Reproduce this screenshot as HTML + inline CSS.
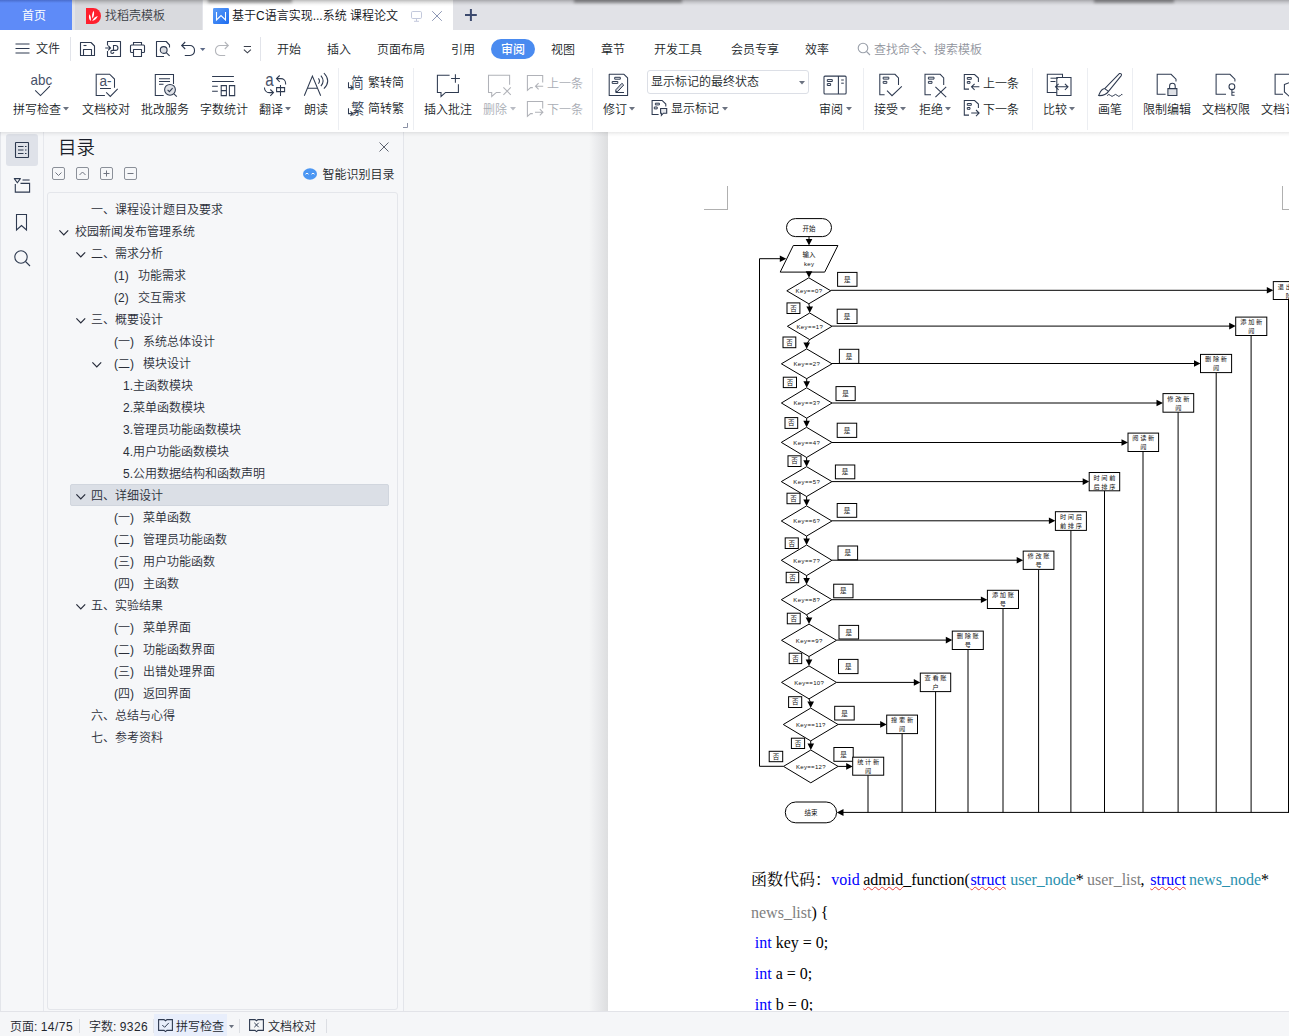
<!DOCTYPE html>
<html lang="zh-CN"><head><meta charset="utf-8"><title>WPS</title><style>
*{box-sizing:border-box;margin:0;padding:0}
html,body{width:1289px;height:1036px;overflow:hidden;background:#fff}
body{position:relative;font-family:'Liberation Sans','Noto Sans CJK SC',sans-serif;font-size:12px;color:#1e2330}
.t{position:absolute;white-space:nowrap;font-weight:350}
.r{position:absolute;display:block}
svg{overflow:visible}
</style></head><body>
<div class="r" style="left:404px;top:132px;width:885px;height:880px;background:#f5f6f7;"></div>
<div class="r" style="left:589px;top:132px;width:19px;height:880px;background:linear-gradient(to right, rgba(245,246,247,0), #ebecee 40%, #dddedf);"></div>
<div class="r" style="left:608px;top:132px;width:681px;height:880px;background:#ffffff;"></div>
<div class="r" style="left:704px;top:209px;width:24px;height:1px;background:#b0b0b0;"></div>
<div class="r" style="left:727px;top:186px;width:1px;height:24px;background:#b0b0b0;"></div>
<div class="r" style="left:1282px;top:186px;width:1px;height:24px;background:#b0b0b0;"></div>
<div class="r" style="left:1282px;top:209px;width:8px;height:1px;background:#b0b0b0;"></div>
<svg class="r" style="left:0;top:0;font-family:'Liberation Sans','Noto Sans CJK SC',sans-serif" width="1289" height="1011" viewBox="0 0 1289 1011"><path d="M1288.5 299.5L1288.5 812.4" stroke="#000" stroke-width="1" fill="none"/><path d="M1251.1 335.5L1251.1 812.4" stroke="#000" stroke-width="1" fill="none"/><path d="M1216.2 372.6L1216.2 812.4" stroke="#000" stroke-width="1" fill="none"/><path d="M1178.1 412.2L1178.1 812.4" stroke="#000" stroke-width="1" fill="none"/><path d="M1143.0 451.5L1143.0 812.4" stroke="#000" stroke-width="1" fill="none"/><path d="M1104.5 490.8L1104.5 812.4" stroke="#000" stroke-width="1" fill="none"/><path d="M1070.9 530.4L1070.9 812.4" stroke="#000" stroke-width="1" fill="none"/><path d="M1038.6 569.4L1038.6 812.4" stroke="#000" stroke-width="1" fill="none"/><path d="M1003.0 608.5L1003.0 812.4" stroke="#000" stroke-width="1" fill="none"/><path d="M968.0 649.5L968.0 812.4" stroke="#000" stroke-width="1" fill="none"/><path d="M935.6 691.6L935.6 812.4" stroke="#000" stroke-width="1" fill="none"/><path d="M902.1 733.6L902.1 812.4" stroke="#000" stroke-width="1" fill="none"/><path d="M868.0 775.2L868.0 812.4" stroke="#000" stroke-width="1" fill="none"/><path d="M843 812.4L1290 812.4" stroke="#000" stroke-width="1" fill="none"/><polygon points="836.8,812.4 843.5,808.9 843.5,815.9" fill="#000"/><path d="M759.5 766.3L759.5 258.7" stroke="#000" stroke-width="1" fill="none"/><path d="M759.5 766.3L783.5 766.3" stroke="#000" stroke-width="1" fill="none"/><path d="M759.5 258.7L781.3 258.7" stroke="#000" stroke-width="1" fill="none"/><polygon points="779.8,255.39999999999998 779.8,262.0 786.3,258.7" fill="#000"/><rect x="786.5" y="218.6" width="45" height="18" rx="9" fill="#fff" stroke="#000"/><text x="809" y="230.6" font-size="6.5" text-anchor="middle" fill="#111" textLength="13" lengthAdjust="spacing">开始</text><path d="M809 236.6L809 240.5" stroke="#000" stroke-width="1" fill="none"/><polygon points="805.7,239.0 812.3,239.0 809,245.5" fill="#000"/><polygon points="793.3,245.5 837.9,245.5 824.7,272.1 780.2,272.1" fill="#fff" stroke="#000" stroke-width="1"/><text x="809" y="256.8" font-size="6.5" text-anchor="middle" fill="#111" textLength="13" lengthAdjust="spacing">输入</text><text x="809" y="266.2" font-size="6" text-anchor="middle" fill="#111" textLength="10" lengthAdjust="spacing">key</text><path d="M809 272.1L809 272.8" stroke="#000" stroke-width="1" fill="none"/><polygon points="805.7,271.3 812.3,271.3 809,277.8" fill="#000"/><rect x="837.6" y="272.4" width="19.4" height="13.9" fill="#fff" stroke="#000" stroke-width="1"/><text x="847.3" y="281.75" font-size="6.5" text-anchor="middle" fill="#111">是</text><rect x="837.2" y="309.2" width="19.8" height="14.3" fill="#fff" stroke="#000" stroke-width="1"/><text x="847.1" y="318.75" font-size="6.5" text-anchor="middle" fill="#111">是</text><rect x="839.4" y="349.3" width="19.4" height="14.1" fill="#fff" stroke="#000" stroke-width="1"/><text x="849.0999999999999" y="358.75" font-size="6.5" text-anchor="middle" fill="#111">是</text><rect x="836" y="386.6" width="19.2" height="14.0" fill="#fff" stroke="#000" stroke-width="1"/><text x="845.6" y="396.0" font-size="6.5" text-anchor="middle" fill="#111">是</text><rect x="837.2" y="423.2" width="19.5" height="14.2" fill="#fff" stroke="#000" stroke-width="1"/><text x="846.95" y="432.69999999999993" font-size="6.5" text-anchor="middle" fill="#111">是</text><rect x="835.4" y="465" width="19.4" height="13.8" fill="#fff" stroke="#000" stroke-width="1"/><text x="845.0999999999999" y="474.29999999999995" font-size="6.5" text-anchor="middle" fill="#111">是</text><rect x="837.2" y="503.5" width="19.5" height="13.8" fill="#fff" stroke="#000" stroke-width="1"/><text x="846.95" y="512.8" font-size="6.5" text-anchor="middle" fill="#111">是</text><rect x="838" y="546" width="19.6" height="13.8" fill="#fff" stroke="#000" stroke-width="1"/><text x="847.8" y="555.3" font-size="6.5" text-anchor="middle" fill="#111">是</text><rect x="833.7" y="584.2" width="19.3" height="13.6" fill="#fff" stroke="#000" stroke-width="1"/><text x="843.35" y="593.4" font-size="6.5" text-anchor="middle" fill="#111">是</text><rect x="839" y="625.4" width="19.6" height="13.6" fill="#fff" stroke="#000" stroke-width="1"/><text x="848.8" y="634.6" font-size="6.5" text-anchor="middle" fill="#111">是</text><rect x="838.5" y="659.4" width="19.5" height="14.2" fill="#fff" stroke="#000" stroke-width="1"/><text x="848.25" y="668.9" font-size="6.5" text-anchor="middle" fill="#111">是</text><rect x="834.7" y="706.3" width="19.5" height="13.7" fill="#fff" stroke="#000" stroke-width="1"/><text x="844.45" y="715.55" font-size="6.5" text-anchor="middle" fill="#111">是</text><rect x="833.9" y="747.5" width="19.3" height="13.8" fill="#fff" stroke="#000" stroke-width="1"/><text x="843.55" y="756.8" font-size="6.5" text-anchor="middle" fill="#111">是</text><path d="M830.8 290.3L1268.3 290.3" stroke="#000" stroke-width="1" fill="none"/><polygon points="1266.8,287.0 1266.8,293.6 1273.3,290.3" fill="#000"/><path d="M832.0 326.1L1230.7 326.1" stroke="#000" stroke-width="1" fill="none"/><polygon points="1229.2,322.8 1229.2,329.40000000000003 1235.7,326.1" fill="#000"/><path d="M832.0 363.5L1195.5 363.5" stroke="#000" stroke-width="1" fill="none"/><polygon points="1194.0,360.2 1194.0,366.8 1200.5,363.5" fill="#000"/><path d="M832.0 403.0L1158.0 403.0" stroke="#000" stroke-width="1" fill="none"/><polygon points="1156.5,399.7 1156.5,406.3 1163.0,403.0" fill="#000"/><path d="M831.9 442.5L1123.0 442.5" stroke="#000" stroke-width="1" fill="none"/><polygon points="1121.5,439.2 1121.5,445.8 1128.0,442.5" fill="#000"/><path d="M831.9 481.6L1084.2 481.6" stroke="#000" stroke-width="1" fill="none"/><polygon points="1082.7,478.3 1082.7,484.90000000000003 1089.2,481.6" fill="#000"/><path d="M831.9 520.8L1050.4 520.8" stroke="#000" stroke-width="1" fill="none"/><polygon points="1048.9,517.5 1048.9,524.0999999999999 1055.4,520.8" fill="#000"/><path d="M831.9 560.2L1018.2 560.2" stroke="#000" stroke-width="1" fill="none"/><polygon points="1016.7,556.9000000000001 1016.7,563.5 1023.2,560.2" fill="#000"/><path d="M831.9 599.7L982.4 599.7" stroke="#000" stroke-width="1" fill="none"/><polygon points="980.9,596.4000000000001 980.9,603.0 987.4,599.7" fill="#000"/><path d="M836.5 640.1L947.3 640.1" stroke="#000" stroke-width="1" fill="none"/><polygon points="945.8,636.8000000000001 945.8,643.4 952.3,640.1" fill="#000"/><path d="M836.5 682.4L915.3 682.4" stroke="#000" stroke-width="1" fill="none"/><polygon points="913.8,679.1 913.8,685.6999999999999 920.3,682.4" fill="#000"/><path d="M838.1 724.4L881.7 724.4" stroke="#000" stroke-width="1" fill="none"/><polygon points="880.2,721.1 880.2,727.6999999999999 886.7,724.4" fill="#000"/><path d="M838.0999999999999 766.4L847.7 766.4" stroke="#000" stroke-width="1" fill="none"/><polygon points="846.2,763.1 846.2,769.6999999999999 852.7,766.4" fill="#000"/><rect x="1273.3" y="281.6" width="30.9" height="17.9" fill="#fff" stroke="#000" stroke-width="1"/><text x="1288.75" y="288.6" font-size="6.2" text-anchor="middle" fill="#111" textLength="22" lengthAdjust="spacing">退出登</text><text x="1288.75" y="297.6" font-size="6.2" text-anchor="middle" fill="#111">陆</text><rect x="1235.7" y="317.1" width="31.1" height="18.4" fill="#fff" stroke="#000" stroke-width="1"/><text x="1251.25" y="324.1" font-size="6.2" text-anchor="middle" fill="#111" textLength="22" lengthAdjust="spacing">添加新</text><text x="1251.25" y="333.1" font-size="6.2" text-anchor="middle" fill="#111">闻</text><rect x="1200.5" y="354.4" width="31.1" height="18.2" fill="#fff" stroke="#000" stroke-width="1"/><text x="1216.05" y="361.4" font-size="6.2" text-anchor="middle" fill="#111" textLength="22" lengthAdjust="spacing">删除新</text><text x="1216.05" y="370.4" font-size="6.2" text-anchor="middle" fill="#111">闻</text><rect x="1163.0" y="393.6" width="30.7" height="18.6" fill="#fff" stroke="#000" stroke-width="1"/><text x="1178.35" y="400.6" font-size="6.2" text-anchor="middle" fill="#111" textLength="22" lengthAdjust="spacing">修改新</text><text x="1178.35" y="409.6" font-size="6.2" text-anchor="middle" fill="#111">闻</text><rect x="1128.0" y="433.1" width="30.6" height="18.4" fill="#fff" stroke="#000" stroke-width="1"/><text x="1143.3" y="440.1" font-size="6.2" text-anchor="middle" fill="#111" textLength="22" lengthAdjust="spacing">阅读新</text><text x="1143.3" y="449.1" font-size="6.2" text-anchor="middle" fill="#111">闻</text><rect x="1089.2" y="472.5" width="30.5" height="18.3" fill="#fff" stroke="#000" stroke-width="1"/><text x="1104.45" y="479.5" font-size="6.2" text-anchor="middle" fill="#111" textLength="22" lengthAdjust="spacing">时间前</text><text x="1104.45" y="488.5" font-size="6.2" text-anchor="middle" fill="#111" textLength="22" lengthAdjust="spacing">后排序</text><rect x="1055.4" y="511.7" width="31.0" height="18.7" fill="#fff" stroke="#000" stroke-width="1"/><text x="1070.9" y="518.7" font-size="6.2" text-anchor="middle" fill="#111" textLength="22" lengthAdjust="spacing">时间后</text><text x="1070.9" y="527.7" font-size="6.2" text-anchor="middle" fill="#111" textLength="22" lengthAdjust="spacing">前排序</text><rect x="1023.2" y="551.1" width="30.7" height="18.3" fill="#fff" stroke="#000" stroke-width="1"/><text x="1038.5500000000002" y="558.1" font-size="6.2" text-anchor="middle" fill="#111" textLength="22" lengthAdjust="spacing">修改账</text><text x="1038.5500000000002" y="567.1" font-size="6.2" text-anchor="middle" fill="#111">号</text><rect x="987.4" y="590.3" width="31.1" height="18.2" fill="#fff" stroke="#000" stroke-width="1"/><text x="1002.95" y="597.3" font-size="6.2" text-anchor="middle" fill="#111" textLength="22" lengthAdjust="spacing">添加账</text><text x="1002.95" y="606.3" font-size="6.2" text-anchor="middle" fill="#111">号</text><rect x="952.3" y="631.1" width="31.0" height="18.4" fill="#fff" stroke="#000" stroke-width="1"/><text x="967.8" y="638.1" font-size="6.2" text-anchor="middle" fill="#111" textLength="22" lengthAdjust="spacing">删除账</text><text x="967.8" y="647.1" font-size="6.2" text-anchor="middle" fill="#111">号</text><rect x="920.3" y="673.1" width="30.4" height="18.5" fill="#fff" stroke="#000" stroke-width="1"/><text x="935.5" y="680.1" font-size="6.2" text-anchor="middle" fill="#111" textLength="22" lengthAdjust="spacing">查看账</text><text x="935.5" y="689.1" font-size="6.2" text-anchor="middle" fill="#111">户</text><rect x="886.7" y="715.1" width="30.8" height="18.5" fill="#fff" stroke="#000" stroke-width="1"/><text x="902.1" y="722.1" font-size="6.2" text-anchor="middle" fill="#111" textLength="22" lengthAdjust="spacing">搜索新</text><text x="902.1" y="731.1" font-size="6.2" text-anchor="middle" fill="#111">闻</text><rect x="852.7" y="757.2" width="31.0" height="18.0" fill="#fff" stroke="#000" stroke-width="1"/><text x="868.2" y="764.2" font-size="6.2" text-anchor="middle" fill="#111" textLength="22" lengthAdjust="spacing">统计新</text><text x="868.2" y="773.2" font-size="6.2" text-anchor="middle" fill="#111">闻</text><polygon points="808.8,277.8 830.8,290.8 808.8,303.8 786.8,290.8" fill="#fff" stroke="#000" stroke-width="1"/><text x="808.8" y="293.0" font-size="6" text-anchor="middle" fill="#111" textLength="26.5" lengthAdjust="spacing">Key==0?</text><path d="M808.8 303.8L809.7 308.0" stroke="#000" stroke-width="1" fill="none"/><polygon points="806.4000000000001,306.5 813.0,306.5 809.7,313.0" fill="#000"/><polygon points="809.7,313.0 832.0,326.3 809.7,339.6 787.4000000000001,326.3" fill="#fff" stroke="#000" stroke-width="1"/><text x="809.7" y="328.5" font-size="6" text-anchor="middle" fill="#111" textLength="26.5" lengthAdjust="spacing">Key==1?</text><path d="M809.7 339.6L806.7 343.90000000000003" stroke="#000" stroke-width="1" fill="none"/><polygon points="803.4000000000001,342.40000000000003 810.0,342.40000000000003 806.7,348.90000000000003" fill="#000"/><polygon points="806.7,348.90000000000003 832.0,363.8 806.7,378.7 781.4000000000001,363.8" fill="#fff" stroke="#000" stroke-width="1"/><text x="806.7" y="366.0" font-size="6" text-anchor="middle" fill="#111" textLength="26.5" lengthAdjust="spacing">Key==2?</text><path d="M806.7 378.7L806.7 382.8" stroke="#000" stroke-width="1" fill="none"/><polygon points="803.4000000000001,381.3 810.0,381.3 806.7,387.8" fill="#000"/><polygon points="806.7,387.8 832.0,403.0 806.7,418.2 781.4000000000001,403.0" fill="#fff" stroke="#000" stroke-width="1"/><text x="806.7" y="405.2" font-size="6" text-anchor="middle" fill="#111" textLength="26.5" lengthAdjust="spacing">Key==3?</text><path d="M806.7 418.2L806.6 422.29999999999995" stroke="#000" stroke-width="1" fill="none"/><polygon points="803.3000000000001,420.79999999999995 809.9,420.79999999999995 806.6,427.29999999999995" fill="#000"/><polygon points="806.6,427.29999999999995 831.9,442.4 806.6,457.5 781.3000000000001,442.4" fill="#fff" stroke="#000" stroke-width="1"/><text x="806.6" y="444.59999999999997" font-size="6" text-anchor="middle" fill="#111" textLength="26.5" lengthAdjust="spacing">Key==4?</text><path d="M806.6 457.5L806.6 461.70000000000005" stroke="#000" stroke-width="1" fill="none"/><polygon points="803.3000000000001,460.20000000000005 809.9,460.20000000000005 806.6,466.70000000000005" fill="#000"/><polygon points="806.6,466.70000000000005 831.9,481.6 806.6,496.5 781.3000000000001,481.6" fill="#fff" stroke="#000" stroke-width="1"/><text x="806.6" y="483.8" font-size="6" text-anchor="middle" fill="#111" textLength="26.5" lengthAdjust="spacing">Key==5?</text><path d="M806.6 496.5L806.6 500.9" stroke="#000" stroke-width="1" fill="none"/><polygon points="803.3000000000001,499.4 809.9,499.4 806.6,505.9" fill="#000"/><polygon points="806.6,505.9 831.9,521.0 806.6,536.1 781.3000000000001,521.0" fill="#fff" stroke="#000" stroke-width="1"/><text x="806.6" y="523.2" font-size="6" text-anchor="middle" fill="#111" textLength="26.5" lengthAdjust="spacing">Key==6?</text><path d="M806.6 536.1L806.6 540.0" stroke="#000" stroke-width="1" fill="none"/><polygon points="803.3000000000001,538.5 809.9,538.5 806.6,545.0" fill="#000"/><polygon points="806.6,545.0 831.9,560.3 806.6,575.5999999999999 781.3000000000001,560.3" fill="#fff" stroke="#000" stroke-width="1"/><text x="806.6" y="562.5" font-size="6" text-anchor="middle" fill="#111" textLength="26.5" lengthAdjust="spacing">Key==7?</text><path d="M806.6 575.5999999999999L806.6 579.6" stroke="#000" stroke-width="1" fill="none"/><polygon points="803.3000000000001,578.1 809.9,578.1 806.6,584.6" fill="#000"/><polygon points="806.6,584.6 831.9,599.7 806.6,614.8000000000001 781.3000000000001,599.7" fill="#fff" stroke="#000" stroke-width="1"/><text x="806.6" y="601.9000000000001" font-size="6" text-anchor="middle" fill="#111" textLength="26.5" lengthAdjust="spacing">Key==8?</text><path d="M806.6 614.8000000000001L809.0 619.0999999999999" stroke="#000" stroke-width="1" fill="none"/><polygon points="805.7,617.5999999999999 812.3,617.5999999999999 809.0,624.0999999999999" fill="#000"/><polygon points="809.0,624.0999999999999 836.5,640.3 809.0,656.5 781.5,640.3" fill="#fff" stroke="#000" stroke-width="1"/><text x="809.0" y="642.5" font-size="6" text-anchor="middle" fill="#111" textLength="26.5" lengthAdjust="spacing">Key==9?</text><path d="M809.0 656.5L809.0 660.9" stroke="#000" stroke-width="1" fill="none"/><polygon points="805.7,659.4 812.3,659.4 809.0,665.9" fill="#000"/><polygon points="809.0,665.9 836.5,682.4 809.0,698.9 781.5,682.4" fill="#fff" stroke="#000" stroke-width="1"/><text x="809.0" y="684.6" font-size="6" text-anchor="middle" fill="#111" textLength="29.5" lengthAdjust="spacing">Key==10?</text><path d="M809.0 698.9L810.7 703.1" stroke="#000" stroke-width="1" fill="none"/><polygon points="807.4000000000001,701.6 814.0,701.6 810.7,708.1" fill="#000"/><polygon points="810.7,708.1 838.1,724.5 810.7,740.9 783.3000000000001,724.5" fill="#fff" stroke="#000" stroke-width="1"/><text x="810.7" y="726.7" font-size="6" text-anchor="middle" fill="#111" textLength="29.5" lengthAdjust="spacing">Key==11?</text><path d="M810.7 740.9L810.8 745.0" stroke="#000" stroke-width="1" fill="none"/><polygon points="807.5,743.5 814.0999999999999,743.5 810.8,750.0" fill="#000"/><polygon points="810.8,750.0 838.0999999999999,766.4 810.8,782.8 783.5,766.4" fill="#fff" stroke="#000" stroke-width="1"/><text x="810.8" y="768.6" font-size="6" text-anchor="middle" fill="#111" textLength="29.5" lengthAdjust="spacing">Key==12?</text><rect x="787" y="302.9" width="12.9" height="10.6" fill="#fff" stroke="#000" stroke-width="1"/><text x="793.45" y="310.5" font-size="6.5" text-anchor="middle" fill="#111">否</text><rect x="783" y="337" width="12.8" height="10.7" fill="#fff" stroke="#000" stroke-width="1"/><text x="789.4" y="344.65000000000003" font-size="6.5" text-anchor="middle" fill="#111">否</text><rect x="783.3" y="377.2" width="13.2" height="10.4" fill="#fff" stroke="#000" stroke-width="1"/><text x="789.9" y="384.7" font-size="6.5" text-anchor="middle" fill="#111">否</text><rect x="785" y="417.6" width="12.7" height="10.8" fill="#fff" stroke="#000" stroke-width="1"/><text x="791.35" y="425.3" font-size="6.5" text-anchor="middle" fill="#111">否</text><rect x="788" y="455.8" width="13.0" height="10.7" fill="#fff" stroke="#000" stroke-width="1"/><text x="794.5" y="463.45" font-size="6.5" text-anchor="middle" fill="#111">否</text><rect x="787" y="493.2" width="13.0" height="10.5" fill="#fff" stroke="#000" stroke-width="1"/><text x="793.5" y="500.75" font-size="6.5" text-anchor="middle" fill="#111">否</text><rect x="785.2" y="537.9" width="13.1" height="10.6" fill="#fff" stroke="#000" stroke-width="1"/><text x="791.75" y="545.5" font-size="6.5" text-anchor="middle" fill="#111">否</text><rect x="786.2" y="572.3" width="12.5" height="10.4" fill="#fff" stroke="#000" stroke-width="1"/><text x="792.45" y="579.8" font-size="6.5" text-anchor="middle" fill="#111">否</text><rect x="787.3" y="613.2" width="12.9" height="10.6" fill="#fff" stroke="#000" stroke-width="1"/><text x="793.75" y="620.8" font-size="6.5" text-anchor="middle" fill="#111">否</text><rect x="789.2" y="653.2" width="12.5" height="10.4" fill="#fff" stroke="#000" stroke-width="1"/><text x="795.45" y="660.7" font-size="6.5" text-anchor="middle" fill="#111">否</text><rect x="788.6" y="696.7" width="13.1" height="10.8" fill="#fff" stroke="#000" stroke-width="1"/><text x="795.1500000000001" y="704.4" font-size="6.5" text-anchor="middle" fill="#111">否</text><rect x="791.4" y="738.2" width="13.2" height="10.3" fill="#fff" stroke="#000" stroke-width="1"/><text x="798.0" y="745.65" font-size="6.5" text-anchor="middle" fill="#111">否</text><rect x="769.2" y="751.3" width="13.5" height="10.4" fill="#fff" stroke="#000" stroke-width="1"/><text x="775.95" y="758.8" font-size="6.5" text-anchor="middle" fill="#111">否</text><rect x="785.3" y="802" width="51.3" height="20.8" rx="10.4" fill="#fff" stroke="#000"/><text x="811" y="814.8" font-size="6.5" text-anchor="middle" fill="#111" textLength="13" lengthAdjust="spacing">结束</text></svg>
<div class="t" style="font-weight:400;left:751px;top:869.4px;height:22px;line-height:22px;font-size:16px;font-family:'Liberation Serif','Noto Serif CJK SC',serif;color:#000;">函数代码：</div>
<div class="t" style="font-weight:400;left:831.2px;top:869.4px;height:22px;line-height:22px;font-size:16px;font-family:'Liberation Serif','Noto Serif CJK SC',serif;color:#0000ff;">void</div>
<div class="t" style="font-weight:400;left:863.2px;top:869.4px;height:22px;line-height:22px;font-size:16px;font-family:'Liberation Serif','Noto Serif CJK SC',serif;color:#000;"><span style="text-decoration:underline wavy #e8403a 1px;text-underline-offset:1px;">admid</span>_function(</div>
<div class="t" style="font-weight:400;left:970.4px;top:869.4px;height:22px;line-height:22px;font-size:16px;font-family:'Liberation Serif','Noto Serif CJK SC',serif;color:#0000ff;text-decoration:underline wavy #e8403a 1px;text-underline-offset:1px;">struct</div>
<div class="t" style="font-weight:400;left:1010.2px;top:869.4px;height:22px;line-height:22px;font-size:16px;font-family:'Liberation Serif','Noto Serif CJK SC',serif;color:#2b91af;">user_node</div>
<div class="t" style="font-weight:400;left:1075.8px;top:869.4px;height:22px;line-height:22px;font-size:16px;font-family:'Liberation Serif','Noto Serif CJK SC',serif;color:#000;">*</div>
<div class="t" style="font-weight:400;left:1087px;top:869.4px;height:22px;line-height:22px;font-size:16px;font-family:'Liberation Serif','Noto Serif CJK SC',serif;color:#808080;">user_list</div>
<div class="t" style="font-weight:400;left:1140.5px;top:869.4px;height:22px;line-height:22px;font-size:16px;font-family:'Liberation Serif','Noto Serif CJK SC',serif;color:#000;">,</div>
<div class="t" style="font-weight:400;left:1150.3px;top:869.4px;height:22px;line-height:22px;font-size:16px;font-family:'Liberation Serif','Noto Serif CJK SC',serif;color:#0000ff;text-decoration:underline wavy #e8403a 1px;text-underline-offset:1px;">struct</div>
<div class="t" style="font-weight:400;left:1189px;top:869.4px;height:22px;line-height:22px;font-size:16px;font-family:'Liberation Serif','Noto Serif CJK SC',serif;color:#2b91af;">news_node</div>
<div class="t" style="font-weight:400;left:1261px;top:869.4px;height:22px;line-height:22px;font-size:16px;font-family:'Liberation Serif','Noto Serif CJK SC',serif;color:#000;">*</div>
<div class="t" style="font-weight:400;left:751px;top:901.5px;height:22px;line-height:22px;font-size:16px;font-family:'Liberation Serif','Noto Serif CJK SC',serif;color:#000;"><span style="color:#808080">news_list</span>) {</div>
<div class="t" style="font-weight:400;left:754.8px;top:931.7px;height:22px;line-height:22px;font-size:16px;font-family:'Liberation Serif','Noto Serif CJK SC',serif;color:#000;"><span style="color:#0000ff">int</span> key = 0;</div>
<div class="t" style="font-weight:400;left:754.8px;top:962.7px;height:22px;line-height:22px;font-size:16px;font-family:'Liberation Serif','Noto Serif CJK SC',serif;color:#000;"><span style="color:#0000ff">int</span> a = 0;</div>
<div class="t" style="font-weight:400;left:754.8px;top:993.7px;height:22px;line-height:22px;font-size:16px;font-family:'Liberation Serif','Noto Serif CJK SC',serif;color:#000;"><span style="color:#0000ff">int</span> b = 0;</div>
<div class="r" style="left:0px;top:132px;width:404px;height:880px;background:#f6f7f9;"></div>
<div class="r" style="left:0px;top:132px;width:1px;height:880px;background:#e3e5ea;"></div>
<div class="r" style="left:43px;top:132px;width:1px;height:880px;background:#e6e8ed;"></div>
<div class="r" style="left:403px;top:132px;width:1px;height:880px;background:#e3e5ea;"></div>
<div class="r" style="left:6px;top:134px;width:32px;height:32px;background:#dfe2e9;border-radius:3px;"></div>
<svg class="r" style="left:15px;top:142px;" width="14" height="16" viewBox="0 0 14 16"><rect x="0.500" y="0.500" width="13" height="15" rx="0.500" fill="none" stroke="#2e3a50" stroke-width="1.100"/><path d="M3 4.500h5.500M10 4.500h1.500M3 8h5.500M10 8h1.500M3 11.500h5.500M10 11.500h1.500" fill="none" stroke="#2e3a50" stroke-width="1.100"/></svg>
<svg class="r" style="left:0px;top:0px;" width="44" height="200" viewBox="0 0 44 200"><path d="M15.300 184V192.100H29.600V183.400H20.500" fill="none" stroke="#2e3a50" stroke-width="1.100"/><path d="M22.500 180H29.600" fill="none" stroke="#2e3a50" stroke-width="1.100"/><path d="M14.300 178.600H20.400L17.350 182.800Z" fill="none" stroke="#2e3a50" stroke-width="1.100" stroke-linejoin="round"/></svg>
<svg class="r" style="left:16px;top:214px;" width="11" height="17" viewBox="0 0 11 17"><path d="M0.500 0.500h10v15.500l-5-4.500-5 4.500z" fill="none" stroke="#2e3a50" stroke-width="1.100"/></svg>
<svg class="r" style="left:14px;top:250px;" width="17" height="17" viewBox="0 0 17 17"><circle cx="7" cy="7" r="6.200" fill="none" stroke="#2e3a50" stroke-width="1.100"/><path d="M11.500 11.500l4.500 4.500" fill="none" stroke="#2e3a50" stroke-width="1.100"/></svg>
<div class="t" style="left:58px;top:135.50px;height:24px;line-height:24px;font-size:18.5px;color:#1b1f2a;">目录</div>
<svg class="r" style="left:52px;top:167px;" width="13" height="13" viewBox="0 0 13 13"><rect x="0.500" y="0.500" width="12" height="12" rx="1.500" fill="none" stroke="#8b9099"/><path d="M3.500 5.500l3 3 3-3" fill="none" stroke="#6f7480"/></svg>
<svg class="r" style="left:76px;top:167px;" width="13" height="13" viewBox="0 0 13 13"><rect x="0.500" y="0.500" width="12" height="12" rx="1.500" fill="none" stroke="#8b9099"/><path d="M3.500 8l3-3 3 3" fill="none" stroke="#6f7480"/></svg>
<svg class="r" style="left:100px;top:167px;" width="13" height="13" viewBox="0 0 13 13"><rect x="0.500" y="0.500" width="12" height="12" rx="1.500" fill="none" stroke="#8b9099"/><path d="M3.500 6.500h6M6.500 3.500v6" fill="none" stroke="#6f7480"/></svg>
<svg class="r" style="left:124px;top:167px;" width="13" height="13" viewBox="0 0 13 13"><rect x="0.500" y="0.500" width="12" height="12" rx="1.500" fill="none" stroke="#8b9099"/><path d="M3.500 6.500h6" fill="none" stroke="#6f7480"/></svg>
<svg class="r" style="left:379px;top:141.5px;" width="10" height="10" viewBox="0 0 10 10"><path d="M0.500 0.500l9 9M9.500 0.500l-9 9" fill="none" stroke="#5d6370" stroke-width="1"/></svg>
<svg class="r" style="left:303px;top:168px;" width="14" height="12" viewBox="0 0 14 12"><ellipse cx="7" cy="6" rx="7" ry="5.800" fill="#4b96f3"/><path d="M2.500 6.200q1.500-2 3 0M8.500 6.200q1.500-2 3 0" fill="none" stroke="#fff" stroke-width="1"/></svg>
<div class="t" style="left:322.5px;top:166.00px;height:18px;line-height:18px;font-size:12px;color:#1b1f2a;">智能识别目录</div>
<div class="r" style="left:47px;top:192px;width:351px;height:818px;background:#f6f7f9;border:1px solid #e4e6eb;border-radius:3px;"></div>
<div class="r" style="left:70.4px;top:483.6px;width:319px;height:22.6px;background:#dbdfe6;border:1px solid #d1d6de;border-radius:2px;"></div>
<div class="t" style="left:91px;top:201.00px;height:18px;line-height:18px;font-size:12px;color:#2a2e38;">一、课程设计题目及要求</div>
<div class="t" style="left:75px;top:223.00px;height:18px;line-height:18px;font-size:12px;color:#2a2e38;">校园新闻发布管理系统</div>
<svg class="r" style="left:59.3px;top:229.7px;" width="10" height="6" viewBox="0 0 10 6"><path d="M0.400 0.400l4.400 4.400 4.400-4.400" fill="none" stroke="#262b3a" stroke-width="1.200"/></svg>
<div class="t" style="left:91px;top:245.00px;height:18px;line-height:18px;font-size:12px;color:#2a2e38;">二、需求分析</div>
<svg class="r" style="left:76.3px;top:251.7px;" width="10" height="6" viewBox="0 0 10 6"><path d="M0.400 0.400l4.400 4.400 4.400-4.400" fill="none" stroke="#262b3a" stroke-width="1.200"/></svg>
<div class="t" style="left:114px;top:267.00px;height:18px;line-height:18px;font-size:12px;color:#2a2e38;">(1)</div>
<div class="t" style="left:138px;top:267.00px;height:18px;line-height:18px;font-size:12px;color:#2a2e38;">功能需求</div>
<div class="t" style="left:114px;top:289.00px;height:18px;line-height:18px;font-size:12px;color:#2a2e38;">(2)</div>
<div class="t" style="left:138px;top:289.00px;height:18px;line-height:18px;font-size:12px;color:#2a2e38;">交互需求</div>
<div class="t" style="left:91px;top:311.00px;height:18px;line-height:18px;font-size:12px;color:#2a2e38;">三、概要设计</div>
<svg class="r" style="left:76.3px;top:317.7px;" width="10" height="6" viewBox="0 0 10 6"><path d="M0.400 0.400l4.400 4.400 4.400-4.400" fill="none" stroke="#262b3a" stroke-width="1.200"/></svg>
<div class="t" style="left:114px;top:333.00px;height:18px;line-height:18px;font-size:12px;color:#2a2e38;">(一)</div>
<div class="t" style="left:143px;top:333.00px;height:18px;line-height:18px;font-size:12px;color:#2a2e38;">系统总体设计</div>
<div class="t" style="left:114px;top:355.00px;height:18px;line-height:18px;font-size:12px;color:#2a2e38;">(二)</div>
<div class="t" style="left:143px;top:355.00px;height:18px;line-height:18px;font-size:12px;color:#2a2e38;">模块设计</div>
<svg class="r" style="left:92.3px;top:361.7px;" width="10" height="6" viewBox="0 0 10 6"><path d="M0.400 0.400l4.400 4.400 4.400-4.400" fill="none" stroke="#262b3a" stroke-width="1.200"/></svg>
<div class="t" style="left:123px;top:377.00px;height:18px;line-height:18px;font-size:12px;color:#2a2e38;">1.主函数模块</div>
<div class="t" style="left:123px;top:399.00px;height:18px;line-height:18px;font-size:12px;color:#2a2e38;">2.菜单函数模块</div>
<div class="t" style="left:123px;top:421.00px;height:18px;line-height:18px;font-size:12px;color:#2a2e38;">3.管理员功能函数模块</div>
<div class="t" style="left:123px;top:443.00px;height:18px;line-height:18px;font-size:12px;color:#2a2e38;">4.用户功能函数模块</div>
<div class="t" style="left:123px;top:465.00px;height:18px;line-height:18px;font-size:12px;color:#2a2e38;">5.公用数据结构和函数声明</div>
<div class="t" style="left:91px;top:487.00px;height:18px;line-height:18px;font-size:12px;color:#2a2e38;">四、详细设计</div>
<svg class="r" style="left:76.3px;top:493.7px;" width="10" height="6" viewBox="0 0 10 6"><path d="M0.400 0.400l4.400 4.400 4.400-4.400" fill="none" stroke="#262b3a" stroke-width="1.200"/></svg>
<div class="t" style="left:114px;top:509.00px;height:18px;line-height:18px;font-size:12px;color:#2a2e38;">(一)</div>
<div class="t" style="left:143px;top:509.00px;height:18px;line-height:18px;font-size:12px;color:#2a2e38;">菜单函数</div>
<div class="t" style="left:114px;top:531.00px;height:18px;line-height:18px;font-size:12px;color:#2a2e38;">(二)</div>
<div class="t" style="left:143px;top:531.00px;height:18px;line-height:18px;font-size:12px;color:#2a2e38;">管理员功能函数</div>
<div class="t" style="left:114px;top:553.00px;height:18px;line-height:18px;font-size:12px;color:#2a2e38;">(三)</div>
<div class="t" style="left:143px;top:553.00px;height:18px;line-height:18px;font-size:12px;color:#2a2e38;">用户功能函数</div>
<div class="t" style="left:114px;top:575.00px;height:18px;line-height:18px;font-size:12px;color:#2a2e38;">(四)</div>
<div class="t" style="left:143px;top:575.00px;height:18px;line-height:18px;font-size:12px;color:#2a2e38;">主函数</div>
<div class="t" style="left:91px;top:597.00px;height:18px;line-height:18px;font-size:12px;color:#2a2e38;">五、实验结果</div>
<svg class="r" style="left:76.3px;top:603.7px;" width="10" height="6" viewBox="0 0 10 6"><path d="M0.400 0.400l4.400 4.400 4.400-4.400" fill="none" stroke="#262b3a" stroke-width="1.200"/></svg>
<div class="t" style="left:114px;top:619.00px;height:18px;line-height:18px;font-size:12px;color:#2a2e38;">(一)</div>
<div class="t" style="left:143px;top:619.00px;height:18px;line-height:18px;font-size:12px;color:#2a2e38;">菜单界面</div>
<div class="t" style="left:114px;top:641.00px;height:18px;line-height:18px;font-size:12px;color:#2a2e38;">(二)</div>
<div class="t" style="left:143px;top:641.00px;height:18px;line-height:18px;font-size:12px;color:#2a2e38;">功能函数界面</div>
<div class="t" style="left:114px;top:663.00px;height:18px;line-height:18px;font-size:12px;color:#2a2e38;">(三)</div>
<div class="t" style="left:143px;top:663.00px;height:18px;line-height:18px;font-size:12px;color:#2a2e38;">出错处理界面</div>
<div class="t" style="left:114px;top:685.00px;height:18px;line-height:18px;font-size:12px;color:#2a2e38;">(四)</div>
<div class="t" style="left:143px;top:685.00px;height:18px;line-height:18px;font-size:12px;color:#2a2e38;">返回界面</div>
<div class="t" style="left:91px;top:707.00px;height:18px;line-height:18px;font-size:12px;color:#2a2e38;">六、总结与心得</div>
<div class="t" style="left:91px;top:729.00px;height:18px;line-height:18px;font-size:12px;color:#2a2e38;">七、参考资料</div>
<div class="r" style="left:0px;top:0px;width:1289px;height:30px;background:#e1e2e7;"></div>
<div class="r" style="left:0px;top:0px;width:72px;height:30px;background:#5e8bf8;"></div>
<div class="r" style="left:72px;top:0px;width:130px;height:30px;background:#d9dade;"></div>
<div class="r" style="left:72px;top:0px;width:3px;height:30px;background:#e3e4e8;"></div>
<div class="r" style="left:202px;top:0px;width:1px;height:30px;background:#e4e5ea;"></div>
<div class="r" style="left:203px;top:0px;width:250px;height:30px;background:#ffffff;"></div>
<div class="r" style="left:72px;top:0px;width:1217px;height:6px;background:linear-gradient(to bottom, rgba(0,0,0,.26), rgba(0,0,0,.13) 35%, rgba(0,0,0,.04) 70%, rgba(0,0,0,0));"></div>
<div class="r" style="left:0px;top:0px;width:72px;height:3px;background:linear-gradient(to bottom, rgba(20,30,90,.28), rgba(20,30,90,0));"></div>
<div class="r" style="left:208px;top:-3px;width:84px;height:6px;background:rgba(0,0,0,.30);filter:blur(1.6px);"></div>
<div class="r" style="left:574px;top:-3px;width:108px;height:6px;background:rgba(0,0,0,.30);filter:blur(1.6px);"></div>
<div class="r" style="left:1094px;top:-3px;width:80px;height:6px;background:rgba(0,0,0,.30);filter:blur(1.6px);"></div>
<div class="t" style="left:22px;top:6.80px;height:18px;line-height:18px;font-size:12px;color:#ffffff;font-weight:400;">首页</div>
<svg class="r" style="left:86px;top:8px;" width="15" height="16" viewBox="0 0 15 16"><path d="M0 0h7.200a7.800 8 0 0 1 0 16h-7.200z" fill="#ff202e"/><path d="M3.400 6.200c1.500 2 1.900 4.400 1.300 6.900-1.700-1.700-2.300-4.200-1.300-6.900zM7.700 2.700c.9 2.700.4 5.400-1.300 7.900-.7-2.800-.3-5.500 1.300-7.900zM11.800 8.100c-1 2.600-2.800 4.300-5.600 4.900 1.100-2.500 2.900-4.200 5.600-4.900z" fill="#fff"/></svg>
<div class="t" style="left:105px;top:6.80px;height:18px;line-height:18px;font-size:12px;color:#3a3d45;">找稻壳模板</div>
<svg class="r" style="left:213px;top:8px;" width="16" height="16" viewBox="0 0 16 16"><defs><linearGradient id="wg" x1="0" y1="0" x2="1" y2="1"><stop offset="0" stop-color="#5c9cf7"/><stop offset="1" stop-color="#1c6cf0"/></linearGradient></defs><rect width="16" height="16" rx="1.200" fill="url(#wg)"/><path d="M3.500 4v8l4.500-4.400 4.500 4.400v-8" fill="none" stroke="#fff" stroke-width="1.100" stroke-linejoin="miter"/></svg>
<div class="t" style="left:232px;top:6.80px;height:18px;line-height:18px;font-size:12px;color:#111318;">基于C语言实现...系统 课程论文</div>
<svg class="r" style="left:411px;top:11px;" width="11" height="11" viewBox="0 0 11 11"><rect x="0.500" y="0.500" width="10" height="7" rx="1.200" fill="none" stroke="#c3c9dc"/><path d="M5.500 7.500v2.700M3 10.300h5" stroke="#c3c9dc" fill="none"/></svg>
<svg class="r" style="left:432px;top:11px;" width="10" height="10" viewBox="0 0 10 10"><path d="M0.200 0.200l9.600 9.600M9.800 0.200L0.200 9.800" stroke="#8d97b5" stroke-width="1" fill="none"/></svg>
<svg class="r" style="left:465px;top:9px;" width="12" height="12" viewBox="0 0 12 12"><path d="M5.900 0v11.900M0 6h11.800" stroke="#3c4a6e" stroke-width="2" fill="none"/></svg>
<div class="r" style="left:0px;top:30px;width:1289px;height:102px;background:#ffffff;"></div>
<svg class="r" style="left:15px;top:43px;" width="16" height="11" viewBox="0 0 16 11"><path d="M0.5 1h14M0.5 5.500h14M0.5 10h14" stroke="#2e3a50" stroke-width="1.1" fill="none"/></svg>
<div class="t" style="left:36px;top:40.20px;height:18px;line-height:18px;font-size:12px;color:#1b1f2a;">文件</div>
<div class="r" style="left:70px;top:37px;width:1px;height:24px;background:#e2e4ea;"></div>
<svg class="r" style="left:80px;top:42px;" width="15" height="14" viewBox="0 0 15 14"><path d="M0.500 0.500h10.500l3.500 3.500v9.500h-14z M3.500 13.500v-6h8v6" fill="none" stroke="#2e3a50" stroke-width="1.100" stroke-linejoin="round"/><path d="M3.500 3.500h3" stroke="#2e3a50" stroke-width="1.100"/></svg>
<svg class="r" style="left:105px;top:41px;" width="16" height="16" viewBox="0 0 16 16"><path d="M2.500 4.500v-4h13v15h-13v-5.500" fill="none" stroke="#2e3a50" stroke-width="1.100" stroke-linejoin="round"/><path d="M0.200 7h5 M3.200 4.700l2.300 2.300-2.300 2.300" fill="none" stroke="#2e3a50" stroke-width="1.100"/><path d="M8.500 9.500v-5h2a2.400 2.400 0 0 1 0 4.900h-3.200a1.500 1.500 0 1 0 1.500 1.500" fill="none" stroke="#2e3a50" stroke-width="1.100"/></svg>
<svg class="r" style="left:130px;top:42px;" width="15" height="15" viewBox="0 0 15 15"><path d="M3.500 3v-2.500h8v2.500 M3 10.500h-1.500a1 1 0 0 1 -1-1v-5.500a1 1 0 0 1 1-1h12a1 1 0 0 1 1 1v5.500a1 1 0 0 1 -1 1h-1.500" fill="none" stroke="#2e3a50" stroke-width="1.100"/><path d="M3.500 7.500h8v7h-8z" fill="none" stroke="#2e3a50" stroke-width="1.100" stroke-linejoin="round"/></svg>
<svg class="r" style="left:156px;top:41px;" width="15" height="16" viewBox="0 0 15 16"><path d="M13.500 6.500v-2.500l-3.300-3.500h-9.700v15h7.500" fill="none" stroke="#2e3a50" stroke-width="1.100" stroke-linejoin="round"/><circle cx="7.700" cy="9" r="3.400" fill="#dcdee3" stroke="#2e3a50" stroke-width="1.100"/><path d="M10.300 11.600l3.300 3.300" stroke="#2e3a50" stroke-width="1.100"/></svg>
<svg class="r" style="left:181px;top:41px;" width="14" height="15" viewBox="0 0 14 15"><path d="M0.800 4.500h8a4.500 4.500 0 0 1 4.700 4.700v0.600a4.500 4.500 0 0 1 -4.700 4.700h-5" fill="none" stroke="#2e3a50" stroke-width="1.100"/><path d="M4.200 1l-3.500 3.500 3.500 3.500" fill="none" stroke="#2e3a50" stroke-width="1.100"/></svg>
<svg class="r" style="left:200px;top:48px;" width="6" height="4" viewBox="0 0 6 4"><path d="M0 0h5.400l-2.700 3z" fill="#5d6a88"/></svg>
<svg class="r" style="left:215px;top:41px;" width="14" height="15" viewBox="0 0 14 15"><path d="M13.200 4.500h-8a4.500 4.500 0 0 0 -4.700 4.700v0.600a4.500 4.500 0 0 0 4.700 4.700h5" fill="none" stroke="#b3b5ba" stroke-width="1.100"/><path d="M9.800 1l3.500 3.500-3.500 3.500" fill="none" stroke="#b3b5ba" stroke-width="1.100"/></svg>
<svg class="r" style="left:243px;top:45px;" width="9" height="9" viewBox="0 0 9 9"><path d="M0.800 1.500h7.200 M0.900 4.600l3.500 3.200 3.500-3.200" fill="none" stroke="#3a3f4b" stroke-width="1.100"/></svg>
<div class="r" style="left:260px;top:37px;width:1px;height:24px;background:#e2e4ea;"></div>
<div class="t" style="left:277px;top:40.60px;height:18px;line-height:18px;font-size:12px;color:#1b1f2a;">开始</div>
<div class="t" style="left:327px;top:40.60px;height:18px;line-height:18px;font-size:12px;color:#1b1f2a;">插入</div>
<div class="t" style="left:377px;top:40.60px;height:18px;line-height:18px;font-size:12px;color:#1b1f2a;">页面布局</div>
<div class="t" style="left:451px;top:40.60px;height:18px;line-height:18px;font-size:12px;color:#1b1f2a;">引用</div>
<div class="t" style="left:551px;top:40.60px;height:18px;line-height:18px;font-size:12px;color:#1b1f2a;">视图</div>
<div class="t" style="left:601px;top:40.60px;height:18px;line-height:18px;font-size:12px;color:#1b1f2a;">章节</div>
<div class="t" style="left:654px;top:40.60px;height:18px;line-height:18px;font-size:12px;color:#1b1f2a;">开发工具</div>
<div class="t" style="left:731px;top:40.60px;height:18px;line-height:18px;font-size:12px;color:#1b1f2a;">会员专享</div>
<div class="t" style="left:805px;top:40.60px;height:18px;line-height:18px;font-size:12px;color:#1b1f2a;">效率</div>
<div class="r" style="left:491px;top:39px;width:44px;height:20px;background:#4a8bf0;border-radius:10px;"></div>
<div class="t" style="left:501px;top:40.60px;height:18px;line-height:18px;font-size:12px;color:#ffffff;font-weight:500;">审阅</div>
<svg class="r" style="left:857px;top:42px;" width="14" height="14" viewBox="0 0 14 14"><circle cx="6" cy="6" r="4.8" fill="none" stroke="#9aa0aa" stroke-width="1.1"/><path d="M9.5 9.500l3.5 3.5" stroke="#9aa0aa" stroke-width="1.1"/></svg>
<div class="t" style="left:874px;top:40.60px;height:18px;line-height:18px;font-size:12px;color:#8f939c;">查找命令、搜索模板</div>
<div class="t" style="left:13px;top:101.00px;height:18px;line-height:18px;font-size:12px;color:#1b1f2a;">拼写检查</div>
<svg class="r" style="left:63px;top:107px;" width="6" height="4" viewBox="0 0 6 4"><path d="M0 0h6l-3 3.500z" fill="#6b7280"/></svg>
<div class="t" style="left:82px;top:101.00px;height:18px;line-height:18px;font-size:12px;color:#1b1f2a;">文档校对</div>
<div class="t" style="left:141px;top:101.00px;height:18px;line-height:18px;font-size:12px;color:#1b1f2a;">批改服务</div>
<div class="t" style="left:200px;top:101.00px;height:18px;line-height:18px;font-size:12px;color:#1b1f2a;">字数统计</div>
<div class="t" style="left:259px;top:101.00px;height:18px;line-height:18px;font-size:12px;color:#1b1f2a;">翻译</div>
<svg class="r" style="left:285px;top:107px;" width="6" height="4" viewBox="0 0 6 4"><path d="M0 0h6l-3 3.500z" fill="#6b7280"/></svg>
<div class="t" style="left:304px;top:101.00px;height:18px;line-height:18px;font-size:12px;color:#1b1f2a;">朗读</div>
<div class="r" style="left:338px;top:68px;width:1px;height:62px;background:#eceef2;"></div>
<div class="t" style="left:368px;top:74.40px;height:18px;line-height:18px;font-size:12px;color:#1b1f2a;">繁转简</div>
<div class="t" style="left:368px;top:100.40px;height:18px;line-height:18px;font-size:12px;color:#1b1f2a;">简转繁</div>
<svg class="r" style="left:403.2px;top:123px;" width="5" height="5" viewBox="0 0 5 5"><path d="M4.5 0v4.500h-4.5" fill="none" stroke="#8a90a5"/></svg>
<div class="r" style="left:413px;top:68px;width:1px;height:62px;background:#eceef2;"></div>
<div class="t" style="left:424px;top:101.00px;height:18px;line-height:18px;font-size:12px;color:#1b1f2a;">插入批注</div>
<div class="t" style="left:483px;top:101.00px;height:18px;line-height:18px;font-size:12px;color:#a9adb5;">删除</div>
<svg class="r" style="left:510px;top:107px;" width="6" height="4" viewBox="0 0 6 4"><path d="M0 0h6l-3 3.500z" fill="#b9bcc4"/></svg>
<div class="t" style="left:547px;top:74.50px;height:18px;line-height:18px;font-size:12px;color:#a9adb5;">上一条</div>
<div class="t" style="left:547px;top:100.50px;height:18px;line-height:18px;font-size:12px;color:#a9adb5;">下一条</div>
<div class="r" style="left:592px;top:68px;width:1px;height:62px;background:#eceef2;"></div>
<div class="t" style="left:603px;top:101.00px;height:18px;line-height:18px;font-size:12px;color:#1b1f2a;">修订</div>
<svg class="r" style="left:629px;top:107px;" width="6" height="4" viewBox="0 0 6 4"><path d="M0 0h6l-3 3.500z" fill="#6b7280"/></svg>
<div class="r" style="left:647px;top:70px;width:162px;height:24px;background:#ffffff;border:1px solid #dcdfe6;border-radius:3px;"></div>
<div class="t" style="left:651px;top:73.00px;height:18px;line-height:18px;font-size:12px;color:#1b1f2a;">显示标记的最终状态</div>
<svg class="r" style="left:799px;top:81px;" width="6" height="4" viewBox="0 0 6 4"><path d="M0 0h6l-3 3.500z" fill="#6b7280"/></svg>
<div class="t" style="left:671px;top:100.30px;height:18px;line-height:18px;font-size:12px;color:#1b1f2a;">显示标记</div>
<svg class="r" style="left:722px;top:107px;" width="6" height="4" viewBox="0 0 6 4"><path d="M0 0h6l-3 3.500z" fill="#6b7280"/></svg>
<div class="t" style="left:819px;top:101.00px;height:18px;line-height:18px;font-size:12px;color:#1b1f2a;">审阅</div>
<svg class="r" style="left:846px;top:107px;" width="6" height="4" viewBox="0 0 6 4"><path d="M0 0h6l-3 3.500z" fill="#6b7280"/></svg>
<div class="r" style="left:863px;top:68px;width:1px;height:62px;background:#eceef2;"></div>
<div class="t" style="left:874px;top:101.00px;height:18px;line-height:18px;font-size:12px;color:#1b1f2a;">接受</div>
<svg class="r" style="left:900px;top:107px;" width="6" height="4" viewBox="0 0 6 4"><path d="M0 0h6l-3 3.500z" fill="#6b7280"/></svg>
<div class="t" style="left:919px;top:101.00px;height:18px;line-height:18px;font-size:12px;color:#1b1f2a;">拒绝</div>
<svg class="r" style="left:945px;top:107px;" width="6" height="4" viewBox="0 0 6 4"><path d="M0 0h6l-3 3.500z" fill="#6b7280"/></svg>
<div class="t" style="left:983px;top:74.50px;height:18px;line-height:18px;font-size:12px;color:#1b1f2a;">上一条</div>
<div class="t" style="left:983px;top:100.50px;height:18px;line-height:18px;font-size:12px;color:#1b1f2a;">下一条</div>
<div class="r" style="left:1032px;top:68px;width:1px;height:62px;background:#eceef2;"></div>
<div class="t" style="left:1043px;top:101.00px;height:18px;line-height:18px;font-size:12px;color:#1b1f2a;">比较</div>
<svg class="r" style="left:1069px;top:107px;" width="6" height="4" viewBox="0 0 6 4"><path d="M0 0h6l-3 3.500z" fill="#6b7280"/></svg>
<div class="r" style="left:1087px;top:68px;width:1px;height:62px;background:#eceef2;"></div>
<div class="t" style="left:1098px;top:101.00px;height:18px;line-height:18px;font-size:12px;color:#1b1f2a;">画笔</div>
<div class="r" style="left:1132px;top:68px;width:1px;height:62px;background:#eceef2;"></div>
<div class="t" style="left:1143px;top:101.00px;height:18px;line-height:18px;font-size:12px;color:#1b1f2a;">限制编辑</div>
<div class="t" style="left:1202px;top:101.00px;height:18px;line-height:18px;font-size:12px;color:#1b1f2a;">文档权限</div>
<div class="t" style="left:1261px;top:101.00px;height:18px;line-height:18px;font-size:12px;color:#1b1f2a;">文档认证</div>
<svg class="r" style="left:0;top:0;font-family:'Liberation Sans','Noto Sans CJK SC',sans-serif" width="1289" height="132" viewBox="0 0 1289 132"><text x="30.5" y="84.6" font-size="14.5" fill="#465068" text-anchor="start" font-weight="350" textLength="21.6" lengthAdjust="spacingAndGlyphs">abc</text><path d="M35.2 90.4L40.5 95.6L49.9 86.2" fill="none" stroke="#2e3a50" stroke-width="1.05" /><path d="M104.9 95.5H96.2V74.2H109.6L114.5 79V87.8" fill="none" stroke="#2e3a50" stroke-width="1.05" /><text x="99.4" y="85.5" font-size="14" fill="#465068" text-anchor="start" font-weight="350" textLength="12" lengthAdjust="spacingAndGlyphs">a-</text><path d="M100 88.5H110.9" fill="none" stroke="#2e3a50" stroke-width="1.05" /><path d="M106.2 92.3L110.3 96.4L117.7 88.9" fill="none" stroke="#2e3a50" stroke-width="1.05" /><path d="M163.7 95.5H155.3V74.4H173.5V84" fill="none" stroke="#2e3a50" stroke-width="1.05" /><path d="M159 78.7H170M159 81.5H170M159 84.2H163.5" fill="none" stroke="#2e3a50" stroke-width="1.05" /><circle cx="170" cy="89.8" r="5.4" fill="#dfe1e6" stroke="#2e3a50" stroke-width="1.05"/><path d="M167.6 89.9L169.4 91.7L172.6 88.1" fill="none" stroke="#2e3a50" stroke-width="1.05" /><path d="M174 93.9L176.8 96.7" fill="none" stroke="#2e3a50" stroke-width="1.05" /><path d="M212.1 76.5H233.9M212.1 81.4H233.9M212.1 86.3H217.8M212.1 91.3H217.8" fill="none" stroke="#2e3a50" stroke-width="1.05" /><path d="M221.2 85.6H226.4V95.6H221.2ZM221.2 90.6H226.4M229.4 85.6H234.7V95.6H229.4Z" fill="none" stroke="#2e3a50" stroke-width="1.05" /><text x="265.3" y="85.6" font-size="19" fill="#465068" text-anchor="start" font-weight="350" textLength="8.4" lengthAdjust="spacingAndGlyphs">a</text><path d="M285.6 84.6V83.2A4.7 4.7 0 0 0 280.9 78.6H276.6M279.7 75.5L276.5 78.6L279.7 81.8" fill="none" stroke="#2e3a50" stroke-width="1.05" /><path d="M264.5 87.5V88A4.6 4.6 0 0 0 269.1 92.6H273.4M270.3 89.5L273.5 92.6L270.3 95.8" fill="none" stroke="#2e3a50" stroke-width="1.05" /><path d="M276.6 87.6H284.6V91.6H276.6ZM280.5 85V96" fill="none" stroke="#2e3a50" stroke-width="1.05" /><path d="M304.3 95.7L312.4 76.1L320.7 95.7M307.4 88.3H317.6" fill="none" stroke="#2e3a50" stroke-width="1.05" /><path d="M318.4 78.3Q320.6 81 318.4 83.7M320.9 75.6Q325.3 81 320.9 86.2M323.9 73Q331.5 81 323.9 88.7" fill="none" stroke="#2e3a50" stroke-width="1.05" /><text x="351.2" y="88.3" font-size="14.5" fill="#2e3a50" text-anchor="start" font-weight="350" textLength="12.4" lengthAdjust="spacingAndGlyphs">简</text><path d="M348.5 82.3V87.6H352.8M350.5 85.4L352.9 87.6L350.5 89.9" fill="none" stroke="#2e3a50" stroke-width="1.05" /><text x="351.2" y="114.3" font-size="14.5" fill="#2e3a50" text-anchor="start" font-weight="350" textLength="13" lengthAdjust="spacingAndGlyphs">繁</text><path d="M348.5 108.3V113.6H352.8M350.5 111.4L352.9 113.6L350.5 115.9" fill="none" stroke="#2e3a50" stroke-width="1.05" /><path d="M449.6 75.3H437.4V92.4H441V96.5L445.6 92.4H458.4V84.3" fill="none" stroke="#2e3a50" stroke-width="1.05" /><path d="M455.4 74.2V82.8M451.1 78.4H459.9" fill="none" stroke="#2e3a50" stroke-width="1.05" /><path d="M500.6 92.4H496.4L491.7 96.5V92.4H488.5V75.3H509.6V84.8" fill="none" stroke="#b0b2b8" stroke-width="1.05" /><path d="M503.4 87.4L510.8 94.8M510.8 87.4L503.4 94.8" fill="none" stroke="#b0b2b8" stroke-width="1.05" /><path d="M532.8 87.6H530.6L527.4 90.4V75.4H542.7V82.4" fill="none" stroke="#b0b2b8" stroke-width="1.05" /><path d="M543.2 86.2H535.6M538.6 83.2L535.5 86.2L538.6 89.3" fill="none" stroke="#b0b2b8" stroke-width="1.05" /><path d="M532.8 113.6H530.6L527.4 116.4V101.5H542.7V108.4" fill="none" stroke="#b0b2b8" stroke-width="1.05" /><path d="M535 112.2H542.8M539.8 109.2L542.9 112.2L539.8 115.3" fill="none" stroke="#b0b2b8" stroke-width="1.05" /><path d="M609.2 74.3H624L627.6 77.9V95.5H609.2Z" fill="none" stroke="#2e3a50" stroke-width="1.05" stroke-linejoin="round"/><path d="M614.7 77.3H620.3V79.2H614.7ZM612.2 81.5H617.8V83.4H612.2Z" fill="none" stroke="#2e3a50" stroke-width="1" /><path d="M615.6 91.6L616 89.6L621.9 83.3L623.7 85L617.7 91.5Z" fill="#d3d6dc" stroke="#2e3a50" stroke-width="1" /><path d="M615.5 92.5H624" fill="none" stroke="#2e3a50" stroke-width="1.05" /><path d="M658.6 114.4H652.1V100.4H662.1L665.8 104V106.6" fill="none" stroke="#2e3a50" stroke-width="1.05" /><path d="M655.4 103.2H659.4V104.9H655.4ZM654.3 107H657.2V108.9H654.3Z" fill="none" stroke="#2e3a50" stroke-width="1" /><path d="M660.6 108.5H666.7V113.2H663.4L661.4 115.3V113.2H660.6Z" fill="#e6e8ec" stroke="#2e3a50" stroke-width="1.1" /><path d="M825 76.1H845.1A1 1 0 0 1 846.1 77.1V92.9A1 1 0 0 1 845.1 93.9H825A1 1 0 0 1 824 92.9V77.1A1 1 0 0 1 825 76.1ZM838.4 76.1V93.9" fill="none" stroke="#2e3a50" stroke-width="1.05" /><path d="M827.3 79.6H832.3V81.5H827.3ZM827.3 83.6H830.6V85.5H827.3Z" fill="none" stroke="#2e3a50" stroke-width="1" /><path d="M841.2 80H843.8M841.2 83.2H843.8" fill="none" stroke="#2e3a50" stroke-width="1" /><path d="M884.6 94.8H879.8V74.3H895L898.5 77.9V85" fill="none" stroke="#2e3a50" stroke-width="1.05" /><path d="M883.1999999999999 77.2H888.8V79.1H883.1999999999999ZM883.1999999999999 81.4H886.8V83.3H883.1999999999999Z" fill="none" stroke="#2e3a50" stroke-width="1" /><path d="M887 90.7L892 95.7L901.8 86.4" fill="none" stroke="#2e3a50" stroke-width="1.05" /><path d="M931 94.8H925V74.3H940.2L943.7 77.9V85" fill="none" stroke="#2e3a50" stroke-width="1.05" /><path d="M928.4 77.2H934V79.1H928.4ZM928.4 81.4H932V83.3H928.4Z" fill="none" stroke="#2e3a50" stroke-width="1" /><path d="M935.4 86.8L946.2 97.2M946.2 86.8L935.4 97.2" fill="none" stroke="#2e3a50" stroke-width="1.05" /><path d="M969 89.1H964.3V74.5H974.6L978.4 78.1V82.0" fill="none" stroke="#2e3a50" stroke-width="1.05" /><path d="M967.3 77.5H971.3V79.3H967.3ZM967.3 81.5H970V83.3H967.3Z" fill="none" stroke="#2e3a50" stroke-width="1" /><path d="M979.4 86.8H971.6M974.6 83.8L971.5 86.8L974.6 89.9" fill="none" stroke="#2e3a50" stroke-width="1.05" /><path d="M969 115.1H964.3V100.5H974.6L978.4 104.1V108.0" fill="none" stroke="#2e3a50" stroke-width="1.05" /><path d="M967.3 103.5H971.3V105.3H967.3ZM967.3 107.5H970V109.3H967.3Z" fill="none" stroke="#2e3a50" stroke-width="1" /><path d="M971.2 113H979M976 110L979.1 113L976 116.1" fill="none" stroke="#2e3a50" stroke-width="1.05" /><path d="M1056.8 92.5H1047.3V74.3H1062.5V77.5" fill="none" stroke="#2e3a50" stroke-width="1.05" /><path d="M1050.5 78.2H1058M1050.5 81.5H1055.5" fill="none" stroke="#2e3a50" stroke-width="1" /><path d="M1056.8 77.5H1071V95.4H1056.8Z" fill="none" stroke="#2e3a50" stroke-width="1.05" /><path d="M1055.6 86.8H1067.9M1058.6 83.8L1055.5 86.8L1058.6 89.9M1064.9 83.8L1068 86.8L1064.9 89.9" fill="none" stroke="#2e3a50" stroke-width="1.05" /><path d="M1119.3 73.6C1120.8 73 1122 74.2 1121.3 75.6L1108.5 91.4L1104.7 88.6Z" fill="none" stroke="#2e3a50" stroke-width="1.05" stroke-linejoin="round"/><path d="M1104.7 88.6C1101 89 1100.3 92 1098.6 95.6C1102.5 95.8 1106.3 94.6 1108.5 91.4" fill="none" stroke="#2e3a50" stroke-width="1.05" /><path d="M1107.2 95.6Q1108.8 93.4 1110.4 95.4T1113.8 95.4T1117.2 95.4T1120.6 95.4T1122.4 94.6" fill="none" stroke="#2e3a50" stroke-width="1" /><path d="M1165.6 94.3H1157.2V74.3H1171.1L1176 79.2V81.4" fill="none" stroke="#2e3a50" stroke-width="1.05" /><path d="M1167.9 88.6H1176.9V95.4H1167.9Z" fill="#dfe1e6" stroke="#2e3a50" stroke-width="1.05" /><path d="M1169.6 88.6V86A2.8 2.8 0 0 1 1175.2 86V88.6" fill="none" stroke="#2e3a50" stroke-width="1.05" /><path d="M1226 94.3H1216.1V74.3H1230L1234.9 79.2V81.4" fill="none" stroke="#2e3a50" stroke-width="1.05" /><circle cx="1231.9" cy="86.7" r="2.9" fill="none" stroke="#2e3a50" stroke-width="1.05"/><path d="M1231.9 89.6V95.8M1231.9 92.2H1234.6M1231.9 95.2H1234.6" fill="none" stroke="#2e3a50" stroke-width="1.05" /><path d="M1283 94.3H1275.1V74.3H1289" fill="none" stroke="#2e3a50" stroke-width="1.05" /><path d="M1284.4 84.5L1290 82.4V97L1284.4 92Z" fill="none" stroke="#2e3a50" stroke-width="1.05" /></svg>
<div class="r" style="left:0px;top:132px;width:1289px;height:5px;background:linear-gradient(to bottom, rgba(0,0,0,.085), rgba(0,0,0,.03) 45%, rgba(0,0,0,0));"></div>
<div class="r" style="left:0px;top:1011px;width:1289px;height:25px;background:#f5f6f8;"></div>
<div class="r" style="left:0px;top:1011px;width:1289px;height:1px;background:#e2e3e8;"></div>
<div class="t" style="left:10px;top:1018.00px;height:18px;line-height:18px;font-size:12px;color:#23272f;">页面: <span style="letter-spacing:.5px">14/75</span></div>
<div class="r" style="left:79px;top:1019px;width:1px;height:14px;background:#dcdee3;"></div>
<div class="t" style="left:89px;top:1018.00px;height:18px;line-height:18px;font-size:12px;color:#23272f;">字数: <span style="letter-spacing:.45px">9326</span></div>
<div class="r" style="left:154px;top:1014px;width:73px;height:22px;background:#e8eefb;"></div>
<div class="r" style="left:153px;top:1019px;width:1px;height:14px;background:#e3e5ea;"></div>
<svg class="r" style="left:158px;top:1019.3px;" width="15" height="14" viewBox="0 0 15 14"><path d="M0.600 0.600H6L7.500 1.800L9 0.600H14.400V11.400H9L7.500 12.600L6 11.400H0.600Z" fill="none" stroke="#2e3a50" stroke-width="1.100"/><path d="M4.300 6l2.300 2.300 4.200-4.400" fill="none" stroke="#2e3a50"/></svg>
<div class="t" style="left:176px;top:1018.00px;height:18px;line-height:18px;font-size:12px;color:#23272f;">拼写检查</div>
<svg class="r" style="left:229px;top:1025px;" width="6" height="4" viewBox="0 0 6 4"><path d="M0 0h5l-2.500 3.200z" fill="#6b7280"/></svg>
<div class="r" style="left:239px;top:1019px;width:1px;height:14px;background:#dcdee3;"></div>
<svg class="r" style="left:249px;top:1019.3px;" width="15" height="14" viewBox="0 0 15 14"><path d="M0.600 0.600H6L7.500 1.800L9 0.600H14.400V11.400H9L7.500 12.600L6 11.400H0.600Z" fill="none" stroke="#2e3a50" stroke-width="1.100"/><path d="M5.300 3.800l4.400 4.400M9.700 3.800l-4.400 4.400" fill="none" stroke="#2e3a50"/></svg>
<div class="t" style="left:268px;top:1018.00px;height:18px;line-height:18px;font-size:12px;color:#23272f;">文档校对</div>
<div class="r" style="left:326px;top:1019px;width:1px;height:14px;background:#dcdee3;"></div>
</body></html>
